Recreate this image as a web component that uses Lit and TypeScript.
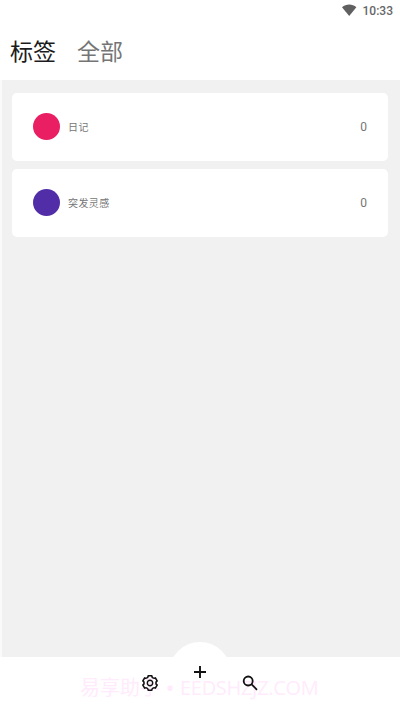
import { LitElement, html, css } from "lit";
import { customElement } from "lit/decorators.js";
import { styleMap } from "lit/directives/style-map.js";

interface Tag {
  name: string;
  color: string;
  count: number;
}

@customElement("app-root")
export class AppRoot extends LitElement {
  static styles = css`
    :host {
      display: flex;
      flex-direction: column;
      width: 400px;
      height: 710px;
      overflow: hidden;
      background: #fff;
      font-family: Roboto, "Noto Sans CJK SC", sans-serif;
    }
    .status {
      height: 22px;
      flex: none;
      display: flex;
      align-items: center;
      justify-content: flex-end;
      gap: 6px;
      padding-right: 7px;
      box-sizing: border-box;
      color: #666;
      font-size: 12px;
      font-weight: 500;
    }
    .status svg {
      width: 15px;
      height: 12px;
      margin-top: -2px;
    }
    .tabs {
      height: 58px;
      flex: none;
      display: flex;
      align-items: center;
      gap: 21px;
      padding: 0 10px 3px;
      box-sizing: border-box;
      font-size: 23px;
      line-height: 34px;
      font-family: "Noto Sans CJK SC", sans-serif;
      color: #757575;
    }
    .tabs .active {
      color: #1c1c1c;
    }
    .list {
      flex: 1;
      display: flex;
      flex-direction: column;
      gap: 8px;
      padding: 13px 12px 0 10px;
      margin-left: 2px;
      background: #f1f1f1;
      box-shadow: -2px 0 0 #fafafa;
    }
    .card {
      height: 68px;
      display: flex;
      align-items: center;
      padding: 0 21px 1px;
      box-sizing: border-box;
      background: #fff;
      border-radius: 5px;
      color: #757575;
    }
    .dot {
      width: 27px;
      height: 27px;
      border-radius: 50%;
    }
    .name {
      flex: 1;
      margin-left: 8px;
      font-family: "Noto Sans CJK SC", sans-serif;
      font-size: 10px;
      line-height: 14px;
      letter-spacing: 0.4px;
    }
    .count {
      font-size: 12px;
      line-height: 14px;
      padding-top: 1px;
    }
    .bar {
      position: relative;
      height: 53px;
      flex: none;
      display: flex;
      justify-content: center;
      background: #fff;
    }
    .item {
      width: 50px;
      height: 52px;
      display: flex;
      align-items: center;
      justify-content: center;
    }
    .item svg,
    .fab svg {
      position: relative;
      fill: none;
      stroke: #111;
    }
    .fab {
      width: 62px;
      height: 62px;
      margin: -15px -6px 0;
      border-radius: 50%;
      background: #fff;
      display: flex;
      align-items: center;
      justify-content: center;
    }
    .fab svg {
      margin-top: -2px;
    }
    .mark {
      position: absolute;
      left: 80px;
      top: 18px;
      display: flex;
      align-items: center;
      font-family: "Open Sans", "Noto Sans CJK SC", sans-serif;
      font-size: 20px;
      line-height: 26px;
      color: #ffebfc;
      white-space: nowrap;
    }
    .mark .bullet {
      width: 20px;
      text-align: center;
      font-size: 24px;
    }
    .mark .site {
      letter-spacing: -0.3px;
    }
  `;

  private tags: Tag[] = [
    { name: "日记", color: "#e91e63", count: 0 },
    { name: "突发灵感", color: "#512da8", count: 0 },
  ];

  render() {
    return html`
      <div class="status">
        <svg viewBox="0 0 15 12">
          <path d="M0 3.2C4-.3 10.4-.3 14.4 3.2L7.2 12Z" fill="#606060" />
        </svg>
        <span>10:33</span>
      </div>
      <div class="tabs">
        <span class="active">标签</span>
        <span>全部</span>
      </div>
      <div class="list">
        ${this.tags.map(
          (t) => html`<div class="card">
            <div class="dot" style=${styleMap({ background: t.color })}></div>
            <div class="name">${t.name}</div>
            <div class="count">${t.count}</div>
          </div>`
        )}
      </div>
      <div class="bar">
        <div class="mark">
          <span>易享助手</span><span class="bullet">•</span
          ><span class="site">EEDSHZJZ.COM</span>
        </div>
        <div class="item">
          <svg width="18" height="18" viewBox="-9 -9 18 18">
            <path
              stroke-width="1.6"
              stroke-linejoin="round"
              d="M-1.8-7.2H1.8A2.3 2.3 0 0 0 5.34-5.16L7.14-2.04A2.3 2.3 0 0 0 7.14 2.04L5.34 5.16A2.3 2.3 0 0 0 1.8 7.2H-1.8A2.3 2.3 0 0 0-5.34 5.16L-7.14 2.04A2.3 2.3 0 0 0-7.14-2.04L-5.34-5.16A2.3 2.3 0 0 0-1.8-7.2Z"
            />
            <circle r="2.7" stroke-width="1.4" />
          </svg>
        </div>
        <div class="fab">
          <svg width="14" height="14" viewBox="-7 -7 14 14">
            <path stroke-width="1.9" d="M-6 0H6M0-6V6" />
          </svg>
        </div>
        <div class="item">
          <svg width="18" height="18" viewBox="-9 -9 18 18">
            <circle cx="-1.8" cy="-2" r="4.5" stroke-width="1.8" />
            <path stroke-width="1.8" d="M1.4 1.2L7 6.8" />
          </svg>
        </div>
      </div>
    `;
  }
}
